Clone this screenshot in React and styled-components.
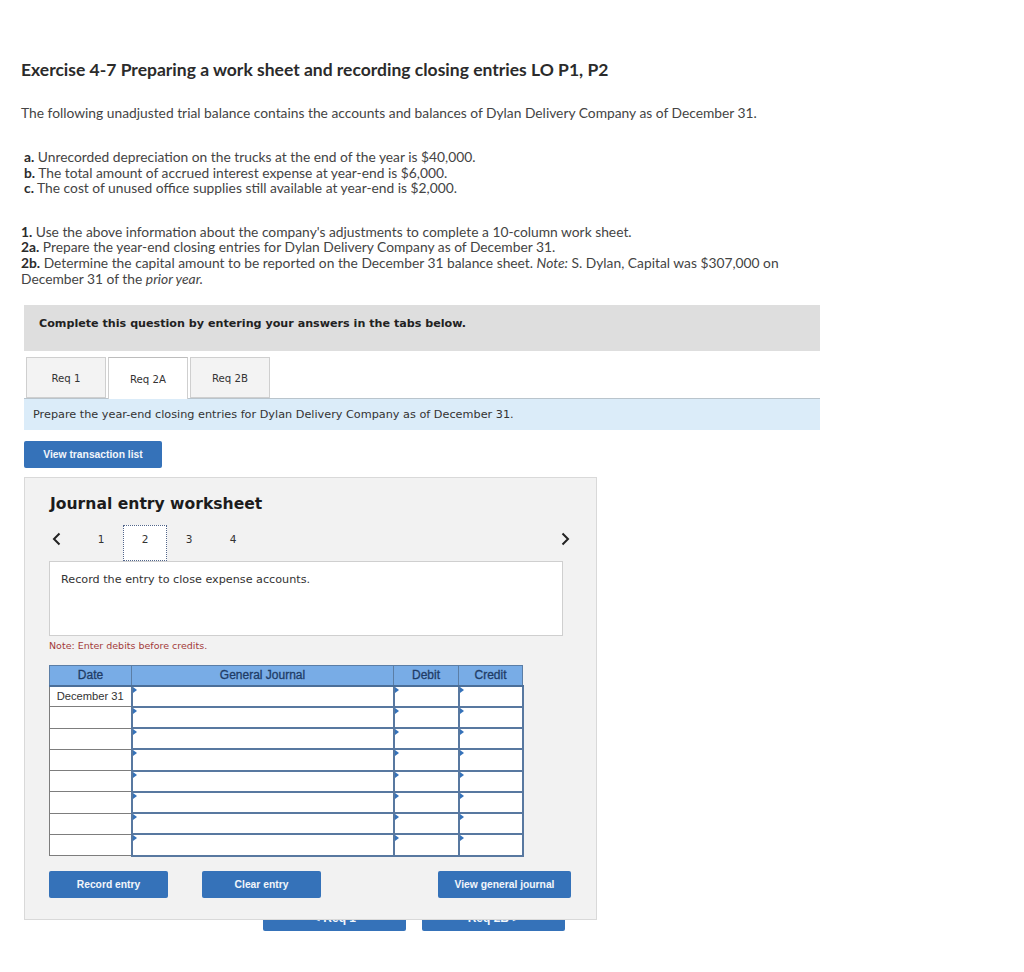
import React from "react"
import styled, { createGlobalStyle } from "styled-components"

const GlobalStyle = createGlobalStyle`
    html, body {
        margin: 0;
        padding: 0;
        background: #ffffff;
    }
`

const Page = styled.div`
    width: 1024px;
    height: 972px;
    overflow: hidden;
    box-sizing: border-box;
    padding: 60px 0 0 21px;
    font-family: "Lato", "Open Sans", sans-serif;
    color: #444444;
`

const Title = styled.h1`
    margin: 0;
    font-size: 17.5px;
    line-height: 20px;
    font-weight: 700;
    color: #2b2b2b;
`

const Intro = styled.p`
    margin: 25px 0 0;
    font-size: 13.8px;
    line-height: 16px;
`

const List = styled.div`
    margin-top: ${props => props.top}px;
    width: 770px;
    font-size: 13.8px;
    line-height: 15.6px;
`

const Line = styled.div`
    padding-left: ${props => props.indent || 0}px;
`

const Mark = styled.b`
    color: #2b2b2b;
`

const Prompt = styled.div`
    width: 796px;
    height: 46px;
    margin: 19px 0 0 3px;
    padding: 0 0 9px 15px;
    box-sizing: border-box;
    display: flex;
    align-items: center;
    background: #dedede;
    font-family: "DejaVu Sans", sans-serif;
    font-size: 11.15px;
    font-weight: 700;
    color: #222222;
`

const Tabs = styled.div`
    display: flex;
    gap: 2px;
    width: 796px;
    margin: 6px 0 0 3px;
    padding-left: 2px;
    box-sizing: border-box;
    height: 42px;
    border-bottom: 1px solid #b9c4cc;
`

const Tab = styled.div`
    width: 80px;
    height: ${props => (props.active ? "42px" : "41px")};
    padding-top: ${props => (props.active ? "1px" : "2px")};
    box-sizing: border-box;
    display: flex;
    align-items: center;
    justify-content: center;
    font-family: "DejaVu Sans", sans-serif;
    font-size: 10.2px;
    color: #333333;
    background: ${props => (props.active ? "#ffffff" : "#f3f3f3")};
    border: 1px solid #cfcfcf;
    border-bottom: ${props => (props.active ? "none" : "1px solid #cfcfcf")};
    border-top-color: ${props => (props.active ? "#bdbdbd" : "#cfcfcf")};
    position: relative;
    z-index: 1;
`

const Instruction = styled.div`
    width: 796px;
    height: 31px;
    margin-left: 3px;
    padding-left: 9px;
    box-sizing: border-box;
    display: flex;
    align-items: center;
    background: #dbecf9;
    font-family: "DejaVu Sans", sans-serif;
    font-size: 11.25px;
    color: #333333;
`

const Button = styled.button`
    width: ${props => props.width}px;
    height: ${props => props.height || 27}px;
    padding: 0;
    border: none;
    border-radius: 2px;
    background: #3572b9;
    color: #f2f6fb;
    font-family: "Liberation Sans", sans-serif;
    font-size: 10.3px;
    font-weight: 700;
`

const TransactionRow = styled.div`
    margin: 11px 0 0 3px;
    height: 27px;
    display: flex;
`

const Panel = styled.section`
    position: relative;
    z-index: 1;
    width: 573px;
    height: 443px;
    margin: 9px 0 0 3px;
    padding: 16px 0 0 24px;
    box-sizing: border-box;
    background: #f2f2f2;
    border: 1px solid #d9d9d9;
`

const PanelTitle = styled.h2`
    margin: 0 0 0 1px;
    font-family: "DejaVu Sans", sans-serif;
    font-size: 15.6px;
    line-height: 20px;
    font-weight: 700;
    color: #1c1c1c;
`

const Pager = styled.div`
    display: flex;
    width: 521px;
    height: 36px;
    margin-top: 11px;
    padding-left: 3px;
    box-sizing: border-box;
    position: relative;
    z-index: 1;
`

const Arrow = styled.svg`
    width: 9px;
    height: 14px;
    flex: none;
    margin-top: 7px;
`

const PageNumber = styled.div`
    width: 44px;
    height: 36px;
    padding-bottom: 8px;
    box-sizing: border-box;
    display: flex;
    align-items: center;
    justify-content: center;
    font-family: "DejaVu Sans", sans-serif;
    font-size: 10.5px;
    color: #333333;
    background: ${props => (props.active ? "#ffffff" : "transparent")};
    border: ${props => (props.active ? "1px dotted #51658a" : "none")};
`

const PagerNumbers = styled.div`
    display: flex;
    margin-left: 18px;
    flex: 1;
`

const EntryBox = styled.div`
    width: 514px;
    height: 75px;
    box-sizing: border-box;
    padding: 11px 11px;
    background: #ffffff;
    border: 1px solid #cfcfcf;
    font-family: "DejaVu Sans", sans-serif;
    font-size: 11.2px;
    line-height: 14px;
    color: #333333;
`

const Note = styled.div`
    margin-top: 4px;
    font-family: "DejaVu Sans", sans-serif;
    font-size: 9.5px;
    line-height: 12px;
    color: #a33a3a;
`

const Journal = styled.table`
    width: 474px;
    margin-top: 13px;
    table-layout: fixed;
    border-collapse: collapse;
    font-family: "Liberation Sans", sans-serif;
    font-size: 12px;
`

const Head = styled.th`
    box-sizing: border-box;
    width: ${props => props.width}px;
    height: 20px;
    padding: 0;
    background: #78ace6;
    color: #1f3c66;
    font-weight: 400;
    -webkit-text-stroke: 0.3px #1f3c66;
    border: 1px solid #5b7ea6;
    border-bottom: 2px solid #4b6f99;
`

const DateCell = styled.td`
    height: 17.25px;
    padding: 0 0 2px;
    text-align: center;
    background: #ffffff;
    color: #333333;
    font-size: 11.2px;
    border: 1px solid #7d7d7d;
`

const EntryCell = styled.td`
    position: relative;
    height: 19.25px;
    padding: 0;
    background: #ffffff;
    border: 2px solid #5878a0;
    &::before {
        content: "";
        position: absolute;
        left: 0;
        top: 0;
        border-left: 4px solid #3572b9;
        border-top: 3px solid transparent;
        border-bottom: 3px solid transparent;
    }
`

const Actions = styled.div`
    display: flex;
    gap: 34px;
    width: 522px;
    margin-top: 14px;
`

const LastAction = styled(Button)`
    margin-left: auto;
`

const Behind = styled.div`
    display: flex;
    gap: 16px;
    margin: -15px 0 0 242px;
`

const BehindButton = styled(Button)`
    font-size: 12px;
`

const rows = ["December 31", "", "", "", "", "", "", ""]

const App = () => (
    <>
        <GlobalStyle />
        <Page>
            <Title>Exercise 4-7 Preparing a work sheet and recording closing entries LO P1, P2</Title>
            <Intro>The following unadjusted trial balance contains the accounts and balances of Dylan Delivery Company as of December 31.</Intro>
            <List top={28}>
                <Line indent={3}><Mark>a.</Mark> Unrecorded depreciation on the trucks at the end of the year is $40,000.</Line>
                <Line indent={3}><Mark>b.</Mark> The total amount of accrued interest expense at year-end is $6,000.</Line>
                <Line indent={3}><Mark>c.</Mark> The cost of unused office supplies still available at year-end is $2,000.</Line>
            </List>
            <List top={28}>
                <Line><Mark>1.</Mark> Use the above information about the company's adjustments to complete a 10-column work sheet.</Line>
                <Line><Mark>2a.</Mark> Prepare the year-end closing entries for Dylan Delivery Company as of December 31.</Line>
                <Line><Mark>2b.</Mark> Determine the capital amount to be reported on the December 31 balance sheet. <i>Note:</i> S. Dylan, Capital was $307,000 on December 31 of the <i>prior year.</i></Line>
            </List>
            <Prompt>Complete this question by entering your answers in the tabs below.</Prompt>
            <Tabs>
                <Tab>Req 1</Tab>
                <Tab active>Req 2A</Tab>
                <Tab>Req 2B</Tab>
            </Tabs>
            <Instruction>Prepare the year-end closing entries for Dylan Delivery Company as of December 31.</Instruction>
            <TransactionRow>
                <Button width={138}>View transaction list</Button>
            </TransactionRow>
            <Panel>
                <PanelTitle>Journal entry worksheet</PanelTitle>
                <Pager>
                    <Arrow viewBox="0 0 9 14"><path d="M7.500 1.500 2 7l5.500 5.500" fill="none" stroke="#222" strokeWidth="2" /></Arrow>
                    <PagerNumbers>
                        <PageNumber>1</PageNumber>
                        <PageNumber active>2</PageNumber>
                        <PageNumber>3</PageNumber>
                        <PageNumber>4</PageNumber>
                    </PagerNumbers>
                    <Arrow viewBox="0 0 9 14"><path d="M1.500 1.500 7 7l-5.500 5.500" fill="none" stroke="#222" strokeWidth="2" /></Arrow>
                </Pager>
                <EntryBox>Record the entry to close expense accounts.</EntryBox>
                <Note>Note: Enter debits before credits.</Note>
                <Journal>
                    <thead>
                        <tr>
                            <Head width={82}>Date</Head>
                            <Head width={262}>General Journal</Head>
                            <Head width={65}>Debit</Head>
                            <Head width={64}>Credit</Head>
                        </tr>
                    </thead>
                    <tbody>
                        {rows.map((date, index) => (
                            <tr key={index}>
                                <DateCell>{date}</DateCell>
                                <EntryCell />
                                <EntryCell />
                                <EntryCell />
                            </tr>
                        ))}
                    </tbody>
                </Journal>
                <Actions>
                    <Button width={119}>Record entry</Button>
                    <Button width={119}>Clear entry</Button>
                    <LastAction width={133}>View general journal</LastAction>
                </Actions>
            </Panel>
            <Behind>
                <BehindButton width={143} height={26}>&lt; Req 1</BehindButton>
                <BehindButton width={143} height={26}>Req 2B &gt;</BehindButton>
            </Behind>
        </Page>
    </>
)

export default App
